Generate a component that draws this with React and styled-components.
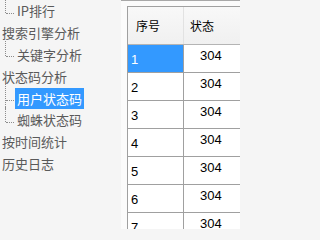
import React from 'react';
import styled, { createGlobalStyle } from 'styled-components';

const GlobalStyle = createGlobalStyle`
	html, body {
		margin: 0;
		padding: 0;
		background: #f5f5f5;
	}
`;

const ROW = 21.8;

const Window = styled.div`
	display: flex;
	width: 240px;
	height: 229px;
	overflow: hidden;
`;

const Tree = styled.div`
	flex: 0 0 121px;
	background: #f5f5f5;
	font-family: "Noto Sans CJK SC", "Noto Sans", sans-serif;
	font-size: 13px;
	color: #5a5a5a;
	overflow: hidden;
`;

const TreeRow = styled.div`
	position: relative;
	height: ${ROW}px;
	display: flex;
	align-items: center;
	white-space: nowrap;
	padding-left: ${props => (props.$child ? '15px' : '0')};

	${props => props.$child && `
		&::before {
			content: '';
			position: absolute;
			left: 5px;
			top: -3px;
			height: ${props.$last ? ROW / 2 + 5 : ROW + 3}px;
			border-left: 1px dotted #8c8c8c;
		}

		&::after {
			content: '';
			position: absolute;
			left: 6px;
			top: ${ROW / 2 + 2}px;
			width: 8px;
			border-top: 1px dotted #8c8c8c;
		}
	`}
`;

const Label = styled.span`
	display: inline-block;
	height: 21px;
	line-height: 21px;
	padding: 0 2px;
	background: ${props => (props.$selected ? '#3399ff' : 'transparent')};
	color: ${props => (props.$selected ? '#fff' : 'inherit')};
`;

const Pane = styled.div`
	flex: 1;
	display: flex;
	flex-direction: column;
	background: #fbfbfb;
	overflow: hidden;
`;

const TopStrip = styled.div`
	height: 3px;
	background: #dde9f5;
	border-left: 1px solid #a8a8a8;
	border-bottom: 1px solid #a8a8a8;
`;

const Grid = styled.div`
	margin: 5px 0 0 6px;
	border-left: 1px solid #a0a0a0;
	border-top: 1px solid #a0a0a0;
	background: #fff;
	width: 200px;
`;

const HeaderRow = styled.div`
	display: flex;
	height: 37px;
	background: linear-gradient(#f8f8f8, #f0f0f0);
	border-bottom: 1px solid #b4b4b4;
	font-family: "Noto Sans CJK SC", "Noto Sans", sans-serif;
	font-size: 12px;
	color: #000;
`;

const HeaderCell = styled.div`
	display: flex;
	align-items: center;
	width: ${props => props.$width}px;
	padding-left: ${props => props.$pad}px;
	box-sizing: border-box;
	border-right: ${props => (props.$sep ? '1px solid #e2e2e2' : 'none')};
`;

const BodyRow = styled.div`
	display: flex;
	height: 27px;
	border-bottom: 1px solid #a0a0a0;
	font-family: "Liberation Sans", Arial, sans-serif;
	font-size: 13px;
	line-height: 15px;
	color: #000;
`;

const NumCell = styled.div`
	width: 56px;
	box-sizing: border-box;
	padding: 7px 0 0 3px;
	border-right: 1px solid #a0a0a0;
	background: ${props => (props.$selected ? '#3399ff' : '#fff')};
	color: ${props => (props.$selected ? '#fff' : '#000')};
`;

const CodeCell = styled.div`
	flex: 1;
	padding: 3px 0 0 16px;
`;

const treeItems = [
	{ text: 'IP排行', child: true, last: true },
	{ text: '搜索引擎分析' },
	{ text: '关键字分析', child: true, last: true },
	{ text: '状态码分析' },
	{ text: '用户状态码', child: true, selected: true },
	{ text: '蜘蛛状态码', child: true, last: true },
	{ text: '按时间统计' },
	{ text: '历史日志' },
];

const rows = [1, 2, 3, 4, 5, 6, 7, 8].map(n => ({ id: n, code: 304 }));

export default function App() {
	return (
		<Window>
			<GlobalStyle />
			<Tree>
				{treeItems.map(item => (
					<TreeRow key={item.text} $child={item.child} $last={item.last}>
						<Label $selected={item.selected}>{item.text}</Label>
					</TreeRow>
				))}
			</Tree>
			<Pane>
				<TopStrip />
				<Grid>
					<HeaderRow>
						<HeaderCell $width={56} $pad={8} $sep>序号</HeaderCell>
						<HeaderCell $width={144} $pad={6}>状态</HeaderCell>
					</HeaderRow>
					{rows.map(row => (
						<BodyRow key={row.id}>
							<NumCell $selected={row.id === 1}>{row.id}</NumCell>
							<CodeCell>{row.code}</CodeCell>
						</BodyRow>
					))}
				</Grid>
			</Pane>
		</Window>
	);
}
